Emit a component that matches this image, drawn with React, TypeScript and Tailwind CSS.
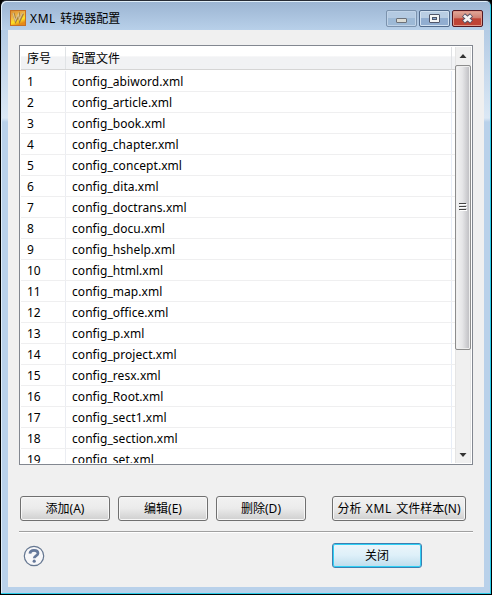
import type { ReactNode } from "react";

const files = [
  "config_abiword.xml",
  "config_article.xml",
  "config_book.xml",
  "config_chapter.xml",
  "config_concept.xml",
  "config_dita.xml",
  "config_doctrans.xml",
  "config_docu.xml",
  "config_hshelp.xml",
  "config_html.xml",
  "config_map.xml",
  "config_office.xml",
  "config_p.xml",
  "config_project.xml",
  "config_resx.xml",
  "config_Root.xml",
  "config_sect1.xml",
  "config_section.xml",
  "config_set.xml",
];

function AppIcon() {
  return (
    <svg width="16" height="16" viewBox="0 0 16 16" className="block">
      <defs>
        <linearGradient id="gold" x1="0" y1="0" x2="0.4" y2="1">
          <stop offset="0" stopColor="#d98a2c" />
          <stop offset="0.45" stopColor="#f0b648" />
          <stop offset="0.75" stopColor="#ffe325" />
          <stop offset="1" stopColor="#e58a18" />
        </linearGradient>
      </defs>
      <rect x="0.5" y="0.5" width="15" height="15" fill="url(#gold)" stroke="#c66f23" />
      <path d="M3.5 3l2.2 8L9 5l.8 5.5L13 3.5" fill="none" stroke="#a8803a" strokeWidth="2.2" />
      <path d="M3 3l2.2 7.5L8.5 4l.8 5.5L12.5 3" fill="none" stroke="#dfc28f" strokeWidth="1.1" />
    </svg>
  );
}

function TitleBar() {
  return (
    <header className="flex h-[29px] shrink-0 items-start justify-between pl-[9px] pr-2">
      <div className="flex items-start pt-[9px]">
        <AppIcon />
        <h1 className="ml-[4px] h-4 whitespace-nowrap pt-px text-[12px] leading-[16px] text-black [word-spacing:1px]">
          <span className="tracking-[0.6px]">XML</span> 转换器配置
        </h1>
      </div>
      <div className="flex gap-[2px] pt-[9px]">
        <button aria-label="最小化" className="flex h-[17px] w-[31px] rounded-[2px] border border-[#7b92ad] bg-linear-to-b from-[#b4cae2] from-45% to-[#9db9d6] to-50% shadow-[inset_0_0_0_1px_#c0d3e8]">
          <svg width="29" height="15"><rect x="9.5" y="7.5" width="10" height="4" rx="0.5" fill="#dcdcd5" stroke="#6c7179" /></svg>
        </button>
        <button aria-label="最大化" className="flex h-[17px] w-[31px] rounded-[2px] border border-[#526a8b] bg-linear-to-b from-[#b9cde3] from-45% to-[#91add0] to-50% shadow-[inset_0_0_0_1px_#d1e0f0]">
          <svg width="29" height="15"><rect x="9.5" y="3.5" width="10" height="8" rx="0.5" fill="#f5f5f5" stroke="#50566a" /><rect x="12.5" y="6.5" width="4" height="2" fill="#88a9d0" stroke="#50566a" /></svg>
        </button>
        <button aria-label="关闭" className="flex h-[17px] w-[31px] rounded-[2px] border border-[#521722] bg-linear-to-b from-[#e0aa9c] from-0% via-[#d08073] via-45% to-[#bf4335] to-52% shadow-[inset_0_0_0_1px_#e09788]">
          <svg width="29" height="15"><path d="M10.5 4l8 7M18.5 4l-8 7" stroke="#565164" strokeWidth="4.6" /><path d="M11 4.5l7 6M18 4.5l-7 6" stroke="#f6f4f5" strokeWidth="2.8" /></svg>
        </button>
      </div>
    </header>
  );
}

function ScrollBar() {
  return (
    <div className="flex h-[416px] w-[16px] shrink-0 flex-col border-x border-[#e5e5e5] bg-[#f0f0f0]">
      <div className="flex h-[18px] shrink-0 justify-center">
        <svg width="14" height="18"><path d="M3.5 11L7 7l3.5 4z" fill="#333" /></svg>
      </div>
      <div className="-mx-px flex h-[285px] shrink-0 items-center justify-center rounded-[2px] border border-[#8d8d8d] bg-linear-to-r from-[#f3f3f3] from-5% via-[#e6e6e8] via-45% to-[#bcbcc0] shadow-[inset_0_0_0_1px_#eeeeee]">
        <svg width="8" height="9" className="-mt-[2px]"><path d="M0 1.5h7M0 4.5h7M0 7.5h7" stroke="#fff" transform="translate(1 1)" /><path d="M0 1.5h7M0 4.5h7M0 7.5h7" stroke="#444" /></svg>
      </div>
      <div className="flex flex-1 items-end justify-center">
        <svg width="14" height="18"><path d="M3.5 8L7 12l3.5-4z" fill="#333" /></svg>
      </div>
    </div>
  );
}

function FileTable() {
  return (
    <section className="flex h-[420px] w-[454px] shrink-0 overflow-hidden border border-[#828790] bg-white pb-px pl-px pt-px">
      <div className="h-[416px] w-[434px] shrink-0 overflow-hidden">
        <div className="flex h-[23px] border-b border-[#d5d5d5] bg-linear-to-b from-white from-40% to-[#f1f2f4] to-45% text-[12px] leading-[23px]">
          <div className="w-[45px] border-r border-[#e0e3e6] pl-[6px]">序号</div>
          <div className="w-[386px] border-r border-[#dfe1e4] pl-[6px]">配置文件</div>
        </div>
        <div className="h-px" />
        {files.map((name, index) => (
          <div key={name} className="flex h-[21px] border-b border-[#efeff0] text-[12px] leading-[21px]">
            <div className="w-[45px] border-r border-[#ebedf2] pl-[6px]">{index + 1}</div>
            <div className="w-[386px] border-r border-[#e7edf7] pl-[6px] tracking-[0.06px]">{name}</div>
          </div>
        ))}
      </div>
      <ScrollBar />
    </section>
  );
}

function DialogButton({ children, size = "w-[90px]" }: { children: ReactNode; size?: string }) {
  return (
    <button className={`${size} h-[25px] shrink-0 whitespace-nowrap rounded-[3px] border border-[#707070] bg-linear-to-b from-[#f2f2f2] via-[#ebebeb] via-49% to-[#cfcfcf] text-[12px] leading-[22px] shadow-[inset_0_0_0_1px_#f7f7f7] [word-spacing:1.2px]`}>
      {children}
    </button>
  );
}

function HelpIcon() {
  return (
    <svg width="22" height="22" viewBox="0 0 22 22" className="block">
      <circle cx="11" cy="11" r="9.7" fill="#f7f7f9" stroke="#657791" strokeWidth="1.2" />
      <path d="M6.9 8.6C7.1 6.4 8.6 5.3 11 5.3c2.4 0 4 1.1 4 3 0 2.6-3.8 2.7-3.8 5" fill="none" stroke="#65789a" strokeWidth="2.7" />
      <circle cx="11.2" cy="16.2" r="1.6" fill="#65789a" />
    </svg>
  );
}

export default function App() {
  return (
    <main className="h-[595px] w-[492px] bg-black font-['Noto_Sans','Noto_Sans_CJK_SC',sans-serif] text-black">
      <div className="flex h-[595px] w-[492px] flex-col overflow-hidden rounded-t-[6px] border border-black border-t-[#262b35] bg-linear-to-b from-[#9bb4d2] from-0% via-[#b9d1ea] via-[30px] to-[#b9d1ea] shadow-[inset_-1px_-1px_0_#29cbe8,inset_1px_1px_0_#e0eef9]">
        <TitleBar />
        <div className="flex">
          <div className="h-[557px] w-[7px] shrink-0 bg-linear-to-b from-[#b4cbe4] from-0% via-[#dbe8f5] via-[88px] to-transparent to-[92px]" />
          <div className="flex h-[557px] w-[476px] flex-col bg-[#f0f0f0] pl-[11px] pt-[15px]">
            <FileTable />
            <div className="mt-[31px] flex pl-px">
              <div className="flex gap-2">
                <DialogButton>添加(A)</DialogButton>
                <DialogButton>编辑(E)</DialogButton>
                <DialogButton>删除(D)</DialogButton>
              </div>
              <div className="ml-[26px] flex">
                <DialogButton size="w-[134px]">
                  分析 <span className="tracking-[0.6px]">XML</span> 文件样本(N)
                </DialogButton>
              </div>
            </div>
            <div className="mt-[10px] h-[2px] w-[454px] border-b border-white bg-[#a0a0a0]" />
            <footer className="mt-[10px] flex">
              <div className="ml-1 pt-[2px]"><HelpIcon /></div>
              <button className="ml-[287px] h-[25px] w-[90px] rounded-[3px] border border-[#3c7fb1] bg-linear-to-b from-[#ecf5fa] from-0% via-[#def0f9] via-49% to-[#bddcec] text-[12px] leading-[22px] shadow-[inset_0_0_0_1px_#2fd0f5]">
                关闭
              </button>
            </footer>
          </div>
          <div className="h-[557px] w-[6px] shrink-0 bg-linear-to-b from-[#b4cbe4] from-0% via-[#dbe8f5] via-[88px] to-transparent to-[92px]" />
        </div>
      </div>
    </main>
  );
}
